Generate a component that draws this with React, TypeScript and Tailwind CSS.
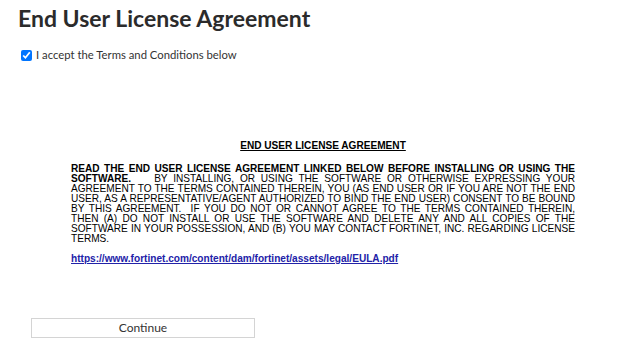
const lines: { bold?: string; text: string }[] = [
  { bold: "READ THE END USER LICENSE AGREEMENT LINKED BELOW BEFORE INSTALLING OR USING THE", text: "" },
  { bold: "SOFTWARE.", text: "\u00a0\u00a0\u00a0 BY INSTALLING, OR USING THE SOFTWARE OR OTHERWISE EXPRESSING YOUR" },
  { text: "AGREEMENT TO THE TERMS CONTAINED THEREIN, YOU (AS END USER OR IF YOU ARE NOT THE END" },
  { text: "USER, AS A REPRESENTATIVE/AGENT AUTHORIZED TO BIND THE END USER) CONSENT TO BE BOUND" },
  { text: "BY THIS AGREEMENT.\u00a0 IF YOU DO NOT OR CANNOT AGREE TO THE TERMS CONTAINED THEREIN," },
  { text: "THEN (A) DO NOT INSTALL OR USE THE SOFTWARE AND DELETE ANY AND ALL COPIES OF THE" },
  { text: "SOFTWARE IN YOUR POSSESSION, AND (B) YOU MAY CONTACT FORTINET, INC. REGARDING LICENSE" },
];

export default function App() {
  return (
    <div className="w-[624px] h-[350px] bg-white px-[18px] overflow-hidden">
      <h1 className="pt-[5px] text-[23px] leading-[26px] font-bold text-[#2b2b2b] font-['Lato',sans-serif]">
        End User License Agreement
      </h1>
      <label className="mt-[16px] flex items-center gap-[4px] text-[11.3px] text-[#333] font-['Lato',sans-serif]">
        <input type="checkbox" defaultChecked className="ml-[3px] w-[11px] h-[11px] m-0 accent-[#0075ff]" />
        I accept the Terms and Conditions below
      </label>
      <div className="ml-[53px] mt-[77px] w-[504px] font-['Liberation_Sans',Arial,sans-serif] text-[10.1px] leading-[10px] text-black">
        <p className="text-center font-bold underline">END USER LICENSE AGREEMENT</p>
        <div className="mt-[13px]">
          {lines.map((l, i) => (
            <div key={i} className="text-justify [text-align-last:justify]">
              {l.bold && <b>{l.bold}</b>}
              {l.text}
            </div>
          ))}
          <div>TERMS.</div>
        </div>
        <p className="mt-[10px]">
          <a href="#" className="font-bold underline text-[#2222a8]">
            https://www.fortinet.com/content/dam/fortinet/assets/legal/EULA.pdf
          </a>
        </p>
      </div>
      <button className="ml-[13px] mt-[54px] w-[224px] h-[20px] border border-[#d4d4d4] bg-white text-[12px] text-[#333] font-['Lato',sans-serif]">
        Continue
      </button>
    </div>
  );
}
